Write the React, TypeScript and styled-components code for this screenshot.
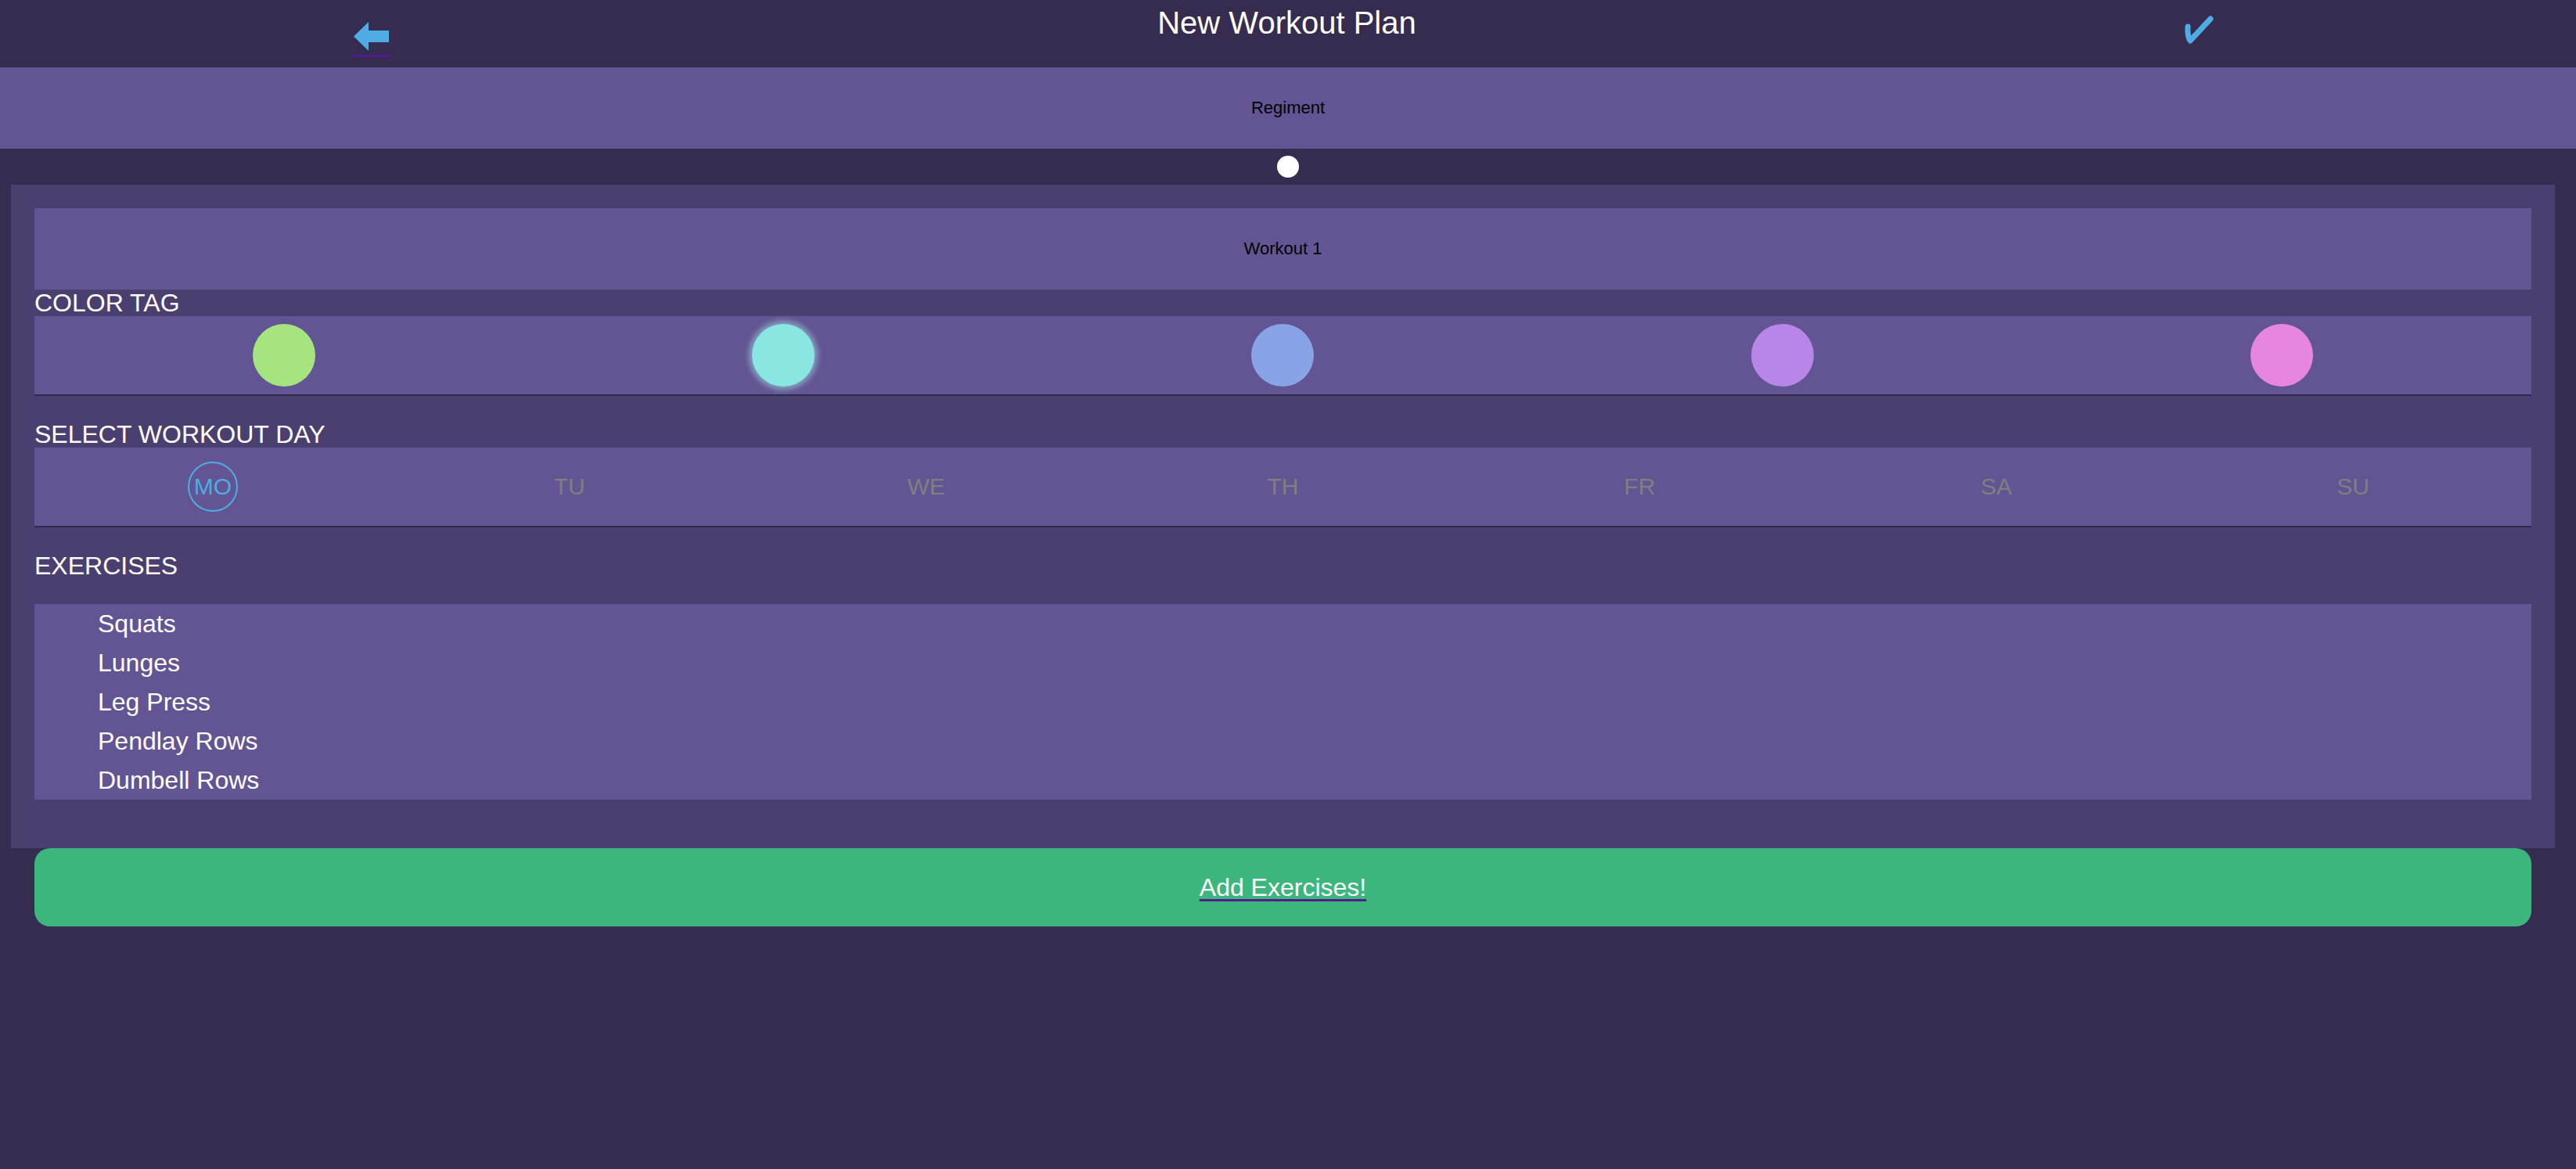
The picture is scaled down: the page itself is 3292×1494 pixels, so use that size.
import styled, { createGlobalStyle } from "styled-components";

const GlobalStyle = createGlobalStyle`
  html, body {
    margin: 0;
    padding: 0;
    background: #352c50;
    font-family: "Liberation Sans", Arial, sans-serif;
  }
  #root {
    min-height: 100vh;
    background: #352c50;
  }
`;

const Header = styled.header`
  height: 86px;
  display: flex;
  justify-content: space-between;
  align-items: flex-start;
  padding: 0 463px 0 449px;
`;

const BackLink = styled.a`
  display: block;
  margin-top: 28px;
  padding: 0 2px 5px 3px;
  border-bottom: 3px solid #4e1b94;
  line-height: 0;
`;

const Title = styled.h1`
  margin: 0;
  padding-top: 6px;
  font-size: 40px;
  line-height: 46px;
  font-weight: normal;
  color: #fff;
`;

const SaveButton = styled.button`
  margin-top: 20px;
  padding: 0;
  border: 0;
  background: none;
  line-height: 0;
  cursor: pointer;
`;

const NameBand = styled.div`
  height: 104px;
  display: flex;
  align-items: center;
  justify-content: center;
  background: #635593;
  color: #000;
  font-size: 22px;
`;

const Pager = styled.div`
  height: 46px;
  display: flex;
  align-items: center;
  justify-content: center;
`;

const PagerDot = styled.span`
  width: 28px;
  height: 28px;
  border-radius: 50%;
  background: #fff;
`;

const Card = styled.section`
  margin: 0 27px 0 14px;
  padding: 30px;
  background: #4b3f70;
`;

const Label = styled.div`
  font-size: 32px;
  line-height: 34px;
  color: #fff;
  text-transform: uppercase;
`;

const PickerRow = styled.div<{ cols: number }>`
  height: 100px;
  display: grid;
  grid-template-columns: repeat(${(p) => p.cols}, 1fr);
  align-items: center;
  justify-items: center;
  background: #635593;
  border-bottom: 2px solid #30284a;
  margin-bottom: 32px;
`;

const Swatch = styled.span<{ color: string; active?: boolean }>`
  width: 80px;
  height: 80px;
  border-radius: 50%;
  background: ${(p) => p.color};
  box-shadow: ${(p) =>
    p.active ? "0 0 7px 4px rgba(160, 225, 230, 0.55)" : "none"};
`;

const Day = styled.span<{ active?: boolean }>`
  width: 64px;
  height: 64px;
  box-sizing: border-box;
  display: flex;
  align-items: center;
  justify-content: center;
  border-radius: 50%;
  border: 2px solid ${(p) => (p.active ? "#4fabe4" : "transparent")};
  color: ${(p) => (p.active ? "#4fabe4" : "#7f7f7f")};
  font-size: 30px;
`;

const ExerciseList = styled.ul`
  margin: 32px 0;
  padding: 0 0 0 81px;
  list-style: none;
  background: #635593;
`;

const Exercise = styled.li`
  font-size: 32px;
  line-height: 50px;
  color: #fff;
`;

const AddButton = styled.a`
  display: flex;
  align-items: center;
  justify-content: center;
  height: 100px;
  margin: 0 57px 0 44px;
  border-radius: 20px;
  background: #3bb77e;
  color: #fff;
  font-size: 32px;
  text-decoration: underline;
  text-decoration-color: #551a8b;
  text-decoration-thickness: 3px;
  text-underline-offset: 4px;
`;

const colors = ["#a4e580", "#89e6e0", "#89a4e6", "#b886e8", "#e786e0"];
const days = ["MO", "TU", "WE", "TH", "FR", "SA", "SU"];
const exercises = ["Squats", "Lunges", "Leg Press", "Pendlay Rows", "Dumbell Rows"];

export default function App() {
  return (
    <>
      <GlobalStyle />
      <Header>
        <BackLink href="#">
          <svg width="45" height="37" viewBox="0 0 45 37">
            <polygon
              points="0,18.5 19,0 19,11 45,11 45,26 19,26 19,37"
              fill="#4fabe4"
            />
          </svg>
        </BackLink>
        <Title>New Workout Plan</Title>
        <SaveButton>
          <svg width="39" height="37" viewBox="0 0 39 37">
            <path
              d="M6 14 Q5 26 9 32 L35 4"
              fill="none"
              stroke="#4fabe4"
              strokeWidth="7"
              strokeLinecap="round"
              strokeLinejoin="round"
            />
          </svg>
        </SaveButton>
      </Header>
      <NameBand>Regiment</NameBand>
      <Pager>
        <PagerDot />
      </Pager>
      <Card>
        <NameBand>Workout 1</NameBand>
        <Label>Color Tag</Label>
        <PickerRow cols={5}>
          {colors.map((c, i) => (
            <Swatch key={c} color={c} active={i === 1} />
          ))}
        </PickerRow>
        <Label>Select Workout Day</Label>
        <PickerRow cols={7}>
          {days.map((d, i) => (
            <Day key={d} active={i === 0}>
              {d}
            </Day>
          ))}
        </PickerRow>
        <Label>Exercises</Label>
        <ExerciseList>
          {exercises.map((e) => (
            <Exercise key={e}>{e}</Exercise>
          ))}
        </ExerciseList>
      </Card>
      <AddButton href="#">Add Exercises!</AddButton>
    </>
  );
}
